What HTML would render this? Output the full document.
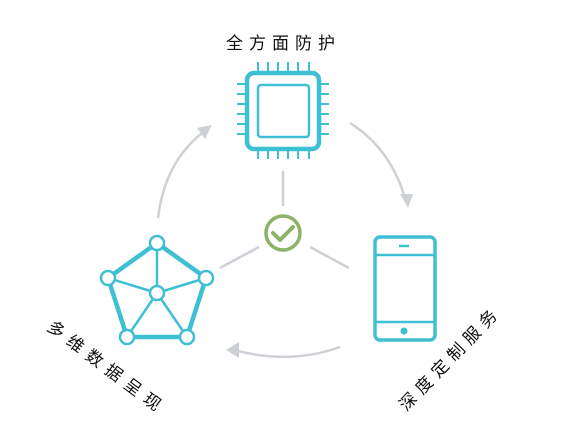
<!DOCTYPE html>
<html><head><meta charset="utf-8"><style>
html,body{margin:0;padding:0;background:#fff;width:567px;height:425px;overflow:hidden}
.t{position:absolute;font-family:"Liberation Sans","Noto Sans CJK SC",sans-serif;font-size:17px;color:#111;font-weight:400;white-space:nowrap;letter-spacing:6px}
</style></head><body>
<svg width="567" height="425" style="position:absolute;left:0;top:0">
<g fill="none" stroke="#cdd1d5" stroke-width="2.5">
<path d="M158 218 Q165 160 206 130"/>
<path d="M350 123 Q390 148 405 198"/>
<path d="M340 347 Q290 365 234 350"/>
<line x1="283" y1="171" x2="283" y2="206"/>
<line x1="259" y1="247" x2="220" y2="268"/>
<line x1="310" y1="247" x2="349" y2="268"/>
</g>
<g fill="#cdd1d5">
<polygon points="212,125 197,128 205,139"/>
<polygon points="408,208 400,194 413,194"/>
<polygon points="226,350 239,342 239,358"/>
</g>
<circle cx="283" cy="233" r="17" fill="none" stroke="#8bb266" stroke-width="3.5"/>
<path d="M273 233 L280 240 L293 227" fill="none" stroke="#8bb266" stroke-width="4" stroke-linecap="round" stroke-linejoin="round"/>
<g stroke="#3fbfd4" fill="none">
<rect x="247" y="73" width="72" height="76" rx="7" stroke-width="4.5"/>
<rect x="258" y="85" width="51" height="52" rx="3" stroke-width="2.5"/>
<g stroke-width="2">
<path d="M258 62v10M268 62v10M278 62v10M288 62v10M298 62v10M309 62v10"/>
<path d="M258 150v9M268 150v9M278 150v9M288 150v9M298 150v9M309 150v9"/>
<path d="M237 84h9M237 94h9M237 104h9M237 114h9M237 124h9M237 134h9"/>
<path d="M320 84h9M320 94h9M320 104h9M320 114h9M320 124h9M320 134h9"/>
</g>
<rect x="375" y="237" width="60" height="103" rx="5" stroke-width="3.5"/>
<path d="M376 255h58M376 322h58" stroke-width="2.5"/>
<path d="M399 246h10" stroke-width="2.5"/>
<g stroke-width="4.5">
<path d="M157 243L206 278L187 337L127 337L108 278Z"/>
</g>
<g stroke-width="2.5">
<path d="M157 243L157 293M206 278L157 293M108 278L157 293M127 337L157 293M187 337L157 293"/>
</g>
<g fill="#fff" stroke-width="2.5">
<circle cx="157" cy="243" r="7"/><circle cx="206" cy="278" r="7"/><circle cx="108" cy="278" r="7"/>
<circle cx="157" cy="293" r="7"/><circle cx="127" cy="337" r="7"/><circle cx="187" cy="337" r="7"/>
</g>
</g>
<circle cx="404" cy="331" r="3.5" fill="#3fbfd4"/>
</svg>
<div class="t" style="left:226px;top:29px">全方面防护</div>
<div class="t" style="left:58px;top:313px;transform:rotate(37deg);transform-origin:0 0;letter-spacing:7px">多维数据呈现</div>
<div class="t" style="left:392px;top:398px;transform:rotate(-46deg);transform-origin:0 0">深度定制服务</div>
</body></html>
